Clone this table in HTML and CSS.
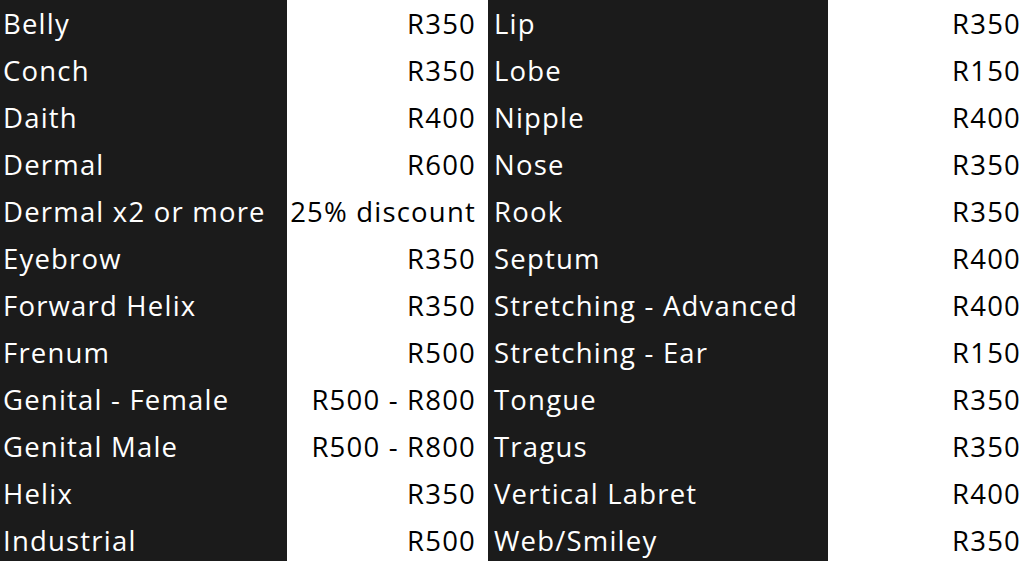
FILE: index.html
```html
<!DOCTYPE html>
<html>
<head>
<meta charset="utf-8">
<link rel="stylesheet" href="styles.css">
</head>
<body>
<div class="sheet">
  <div class="name">Belly</div><div class="price">R350</div><div class="name name2">Lip</div><div class="price price2">R350</div>
  <div class="name">Conch</div><div class="price">R350</div><div class="name name2">Lobe</div><div class="price price2">R150</div>
  <div class="name">Daith</div><div class="price">R400</div><div class="name name2">Nipple</div><div class="price price2">R400</div>
  <div class="name">Dermal</div><div class="price">R600</div><div class="name name2">Nose</div><div class="price price2">R350</div>
  <div class="name">Dermal x2 or more</div><div class="price">25% discount</div><div class="name name2">Rook</div><div class="price price2">R350</div>
  <div class="name">Eyebrow</div><div class="price">R350</div><div class="name name2">Septum</div><div class="price price2">R400</div>
  <div class="name">Forward Helix</div><div class="price">R350</div><div class="name name2">Stretching - Advanced</div><div class="price price2">R400</div>
  <div class="name">Frenum</div><div class="price">R500</div><div class="name name2">Stretching - Ear</div><div class="price price2">R150</div>
  <div class="name">Genital - Female</div><div class="price">R500 - R800</div><div class="name name2">Tongue</div><div class="price price2">R350</div>
  <div class="name">Genital Male</div><div class="price">R500 - R800</div><div class="name name2">Tragus</div><div class="price price2">R350</div>
  <div class="name">Helix</div><div class="price">R350</div><div class="name name2">Vertical Labret</div><div class="price price2">R400</div>
  <div class="name">Industrial</div><div class="price">R500</div><div class="name name2">Web/Smiley</div><div class="price price2">R350</div>
</div>
</body>
</html>
```
FILE: styles.css
```css
html, body {
  margin: 0;
  padding: 0;
  background: #ffffff;
  overflow: hidden;
}
.sheet {
  display: grid;
  grid-template-columns: 287px 201px 340px 202px;
  grid-auto-rows: 47px;
  width: 1030px;
  font-family: "Open Sans", "Liberation Sans", sans-serif;
  font-size: 27.5px;
  letter-spacing: 1.2px;
  line-height: 47px;
}
.name {
  background: #1b1b1b;
  color: #ffffff;
  padding-left: 3px;
  white-space: nowrap;
}
.name2 {
  padding-left: 6px;
}
.price {
  background: #ffffff;
  color: #000000;
  text-align: right;
  padding-right: 12px;
  white-space: nowrap;
}
.price2 {
  padding-right: 9px;
}
```
